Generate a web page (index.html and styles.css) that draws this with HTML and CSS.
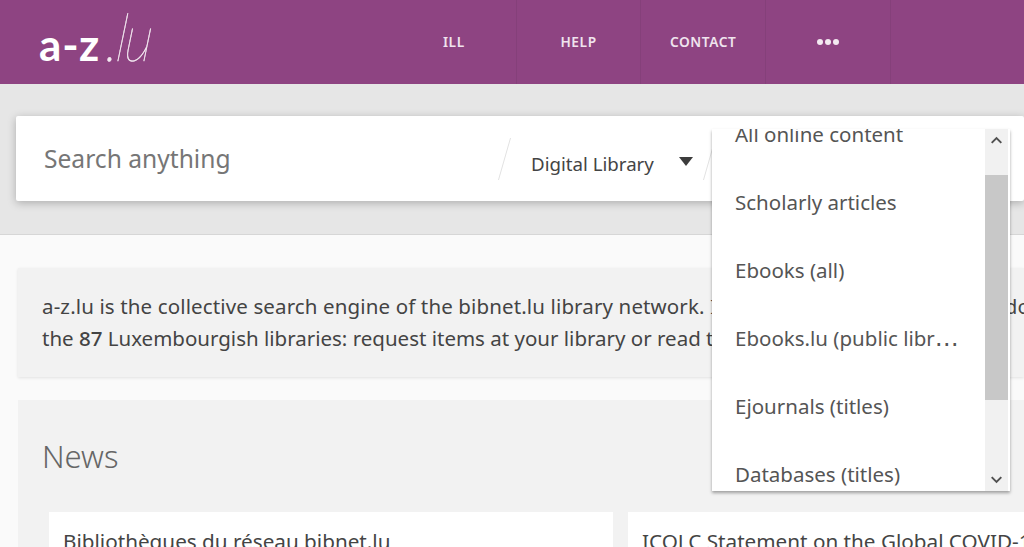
FILE: index.html
```html
<!DOCTYPE html>
<html lang="en">
<head>
<meta charset="utf-8">
<title>a-z.lu</title>
<link rel="stylesheet" href="styles.css">
</head>
<body>
<header class="topbar">
  <a class="logo"><span class="logo-az">a-z</span><span class="logo-lu">.lu</span></a>
  <nav class="nav">
    <a class="nav-item">ILL</a>
    <a class="nav-item">HELP</a>
    <a class="nav-item">CONTACT</a>
    <a class="nav-item nav-more"><i></i><i></i><i></i></a>
    <span class="nav-rest"></span>
  </nav>
</header>
<section class="hero">
  <form class="searchbar">
    <span class="placeholder">Search anything</span>
    <span class="slash"></span>
    <span class="scope">Digital Library</span>
    <span class="caret"></span>
    <span class="slash slash-two"></span>
  </form>
</section>
<main class="content">
  <section class="intro">
    <p><span class="line-one">a-z.lu is the collective search engine of the bibnet.lu library network. It grants access to all of these documents of</span><br>the <b>87</b> Luxembourgish libraries: request items at your library or read them online.</p>
  </section>
  <section class="news">
    <h2>News</h2>
    <div class="news-grid">
      <article class="news-card">Bibliothèques du réseau bibnet.lu</article>
      <article class="news-card">ICOLC Statement on the Global COVID-19 Pandemic</article>
    </div>
  </section>
</main>
<div class="dropdown">
  <ul class="options">
    <li>All online content</li>
    <li>Scholarly articles</li>
    <li>Ebooks (all)</li>
    <li>Ebooks.lu (public libr<span class="ellipsis">…</span></li>
    <li>Ejournals (titles)</li>
    <li>Databases (titles)</li>
  </ul>
  <div class="scrollbar">
    <svg class="arrow" viewBox="0 0 24 22" aria-hidden="true"><path d="M7 14l5-5 5 5"/></svg>
    <div class="track"><div class="thumb"></div></div>
    <svg class="arrow" viewBox="0 0 24 22" aria-hidden="true"><path d="M7 8l5 5 5-5"/></svg>
  </div>
</div>
</body>
</html>
```
FILE: styles.css
```css
* { box-sizing: border-box; }
html, body { margin: 0; height: 547px; overflow: hidden; }
body { font-family: "Noto Sans", "Lato", sans-serif; background: #fafafa; color: #444; position: relative; }

.topbar { height: 84px; background: #8e4482; display: flex; }
.logo { width: 392px; padding: 5px 0 0 39px; display: flex; align-items: baseline; height: 67px; color: #fff; }
.logo-az { font-family: "Lato", sans-serif; font-size: 44px; font-weight: 700; line-height: 62px; letter-spacing: .8px; color: #fff; }
.logo-lu { display: inline-block; font-family: "Lato", sans-serif; font-style: italic; font-size: 66px; line-height: 62px; font-weight: 100; letter-spacing: -3px; color: #f3e9f1; -webkit-text-stroke: .5px #f3e9f1; margin-left: 4px; transform: skewX(-6deg) scaleX(.84); transform-origin: left bottom; }
.nav { display: flex; flex: 1; }
.nav-item { width: 124.7px; display: flex; align-items: center; justify-content: center; height: 84px; padding-bottom: 2px; border-right: 1px solid #85407a; color: #f0e4ee; font-size: 13.7px; font-weight: 600; letter-spacing: .6px; }
.nav-more { gap: 2px; padding-bottom: 0; }
.nav-more i { width: 6px; height: 6px; border-radius: 50%; background: #f3e9f1; }
.nav-rest { flex: 1; }

.hero { height: 151px; padding: 32px 0 0 16px; background: #e6e6e6; border-bottom: 1px solid #d6d6d6; }
.searchbar { height: 85px; background: #fff; border-radius: 2px; box-shadow: 0 2px 8px rgba(0,0,0,.25); display: flex; align-items: center; color: #444; }
.placeholder { width: 488px; padding-left: 28px; font-size: 24.6px; color: #767676; }
.slash { width: 1px; height: 42px; background: #e2e2e2; transform: skewX(-16deg); }
.scope { margin-left: 26px; width: 148px; font-size: 18.7px; color: #444; position: relative; top: 5px; white-space: nowrap; }
.caret { width: 0; height: 0; border: 7px solid transparent; border-top: 9px solid #3c3c3c; border-bottom: 0; position: relative; top: 3px; }
.slash-two { margin-left: 16px; }

.content { padding: 33px 0 0 18px; }
.intro { height: 109px; background: #f2f2f2; box-shadow: 0 1px 3px rgba(0,0,0,.1); padding: 22px 0 0 24px; white-space: nowrap; overflow: hidden; }
.intro p { margin: 0; font-size: 20.5px; line-height: 32px; color: #444; }
.line-one { letter-spacing: .13px; }
.intro b { font-weight: 500; }
.news { margin-top: 23px; height: 200px; background: #f2f2f2; padding: 0 0 0 31px; }
.news h2 { margin: 0 0 0 -7px; padding-top: 35px; height: 112px; font-size: 31px; line-height: 42px; font-weight: 300; color: #666; }
.news-grid { display: flex; gap: 15px; white-space: nowrap; }
.news-card { background: #fff; width: 564px; height: 80px; padding: 16px 14px; font-size: 20.7px; line-height: 26px; color: #444; flex: none; }

.dropdown { position: absolute; left: 712px; top: 129px; width: 298px; height: 362px; background: #fff; display: flex; box-shadow: 0 2px 3px rgba(0,0,0,.35); overflow: hidden; }
.options { list-style: none; margin: -29px 0 0; padding: 0; width: 273px; flex: none; }
.options li { height: 68px; line-height: 68px; padding-left: 23px; font-size: 20.5px; color: #555; white-space: nowrap; }
.ellipsis { font-family: "DejaVu Sans", sans-serif; font-size: 24px; }
.scrollbar { width: 23px; background: #f1f1f1; display: flex; flex-direction: column; }
.arrow { width: 23px; height: 22px; flex: none; fill: none; stroke: #505050; stroke-width: 2; }
.track { flex: 1; padding-top: 24px; }
.thumb { height: 225px; background: #c8c8c8; }
```
